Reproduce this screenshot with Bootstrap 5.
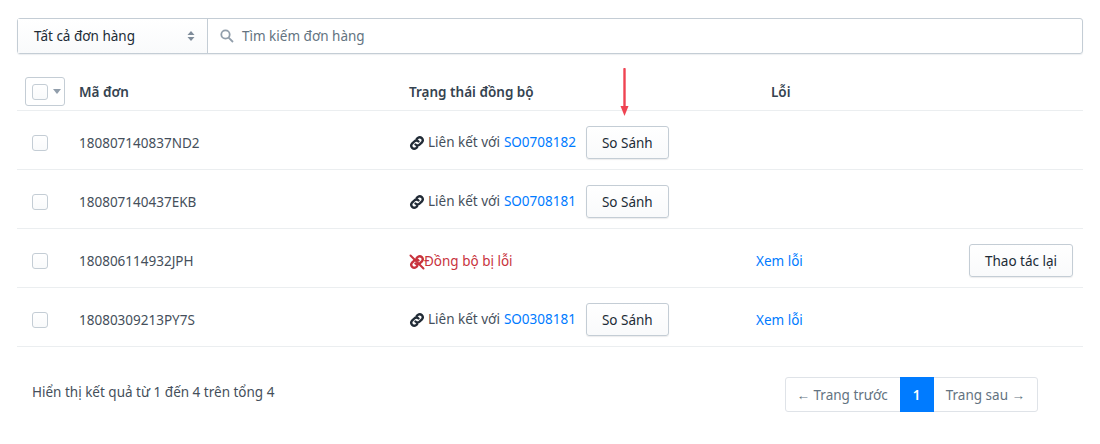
<!DOCTYPE html>
<html lang="vi">
<head>
<meta charset="utf-8">
<title>Đơn hàng</title>
<link href="https://cdn.jsdelivr.net/npm/bootstrap@5.3.0/dist/css/bootstrap.min.css" rel="stylesheet">
<style>
html,body{height:444px;overflow:hidden}
body{font-family:"Noto Sans","Liberation Sans",sans-serif;font-size:13.5px;color:#212b36;background:#fff;padding:18px 17px 0}
.filter-bar{height:36px;border:1px solid #c4cdd5;border-radius:3px;box-shadow:0 1px 1px rgba(99,115,129,.12)}
.filter-select{width:190px;padding:0 12px 0 16px;background:linear-gradient(#fff,#f9fafb);border-right:1px solid #c4cdd5;color:#212b36}
.filter-search{padding:0 0 0 12px;color:#637381;gap:8px}
.updown{margin-bottom:1px}
.orders{margin:14px 0 0;table-layout:fixed;width:1066px;border-collapse:collapse}
.orders th,.orders td{border-bottom:1px solid #ebeef0;padding:0;vertical-align:middle;color:#454f5b;font-weight:400}
.orders th{height:42px;font-weight:600;color:#354350;padding-top:6px}
.orders td{height:59px;padding-top:6px}
.orders td.txt-cell{padding-top:8px}
.col-chk{width:62px}.col-id{width:330px}.col-sync{width:347px}.col-err{width:213px}
.head-chk{width:40px;height:29px;margin-left:8px;border:1px solid #c4cdd5;border-radius:3px;gap:5px;padding-left:6px}
.chk-box{display:block;width:16px;height:16px;border:1px solid #c4cdd5;border-radius:3px;background:linear-gradient(#fff,#f9fafb)}
.row-chk{margin-left:15px}
.caret-d{width:0;height:0;border:4px solid transparent;border-top:5px solid #919eab;border-bottom:0}
.act-btn{height:33px;border:1px solid #c4cdd5;border-radius:3px;background:linear-gradient(#fff,#f9fafb);font-size:13.5px;color:#212b36;padding:3px 15px 0;box-shadow:0 1px 1px rgba(22,29,37,.08);line-height:1;white-space:nowrap}
.row-gap{gap:10px}
.blue-link{color:#007bff;text-decoration:none}
.so-link{margin-left:1px}
.sync-ok{color:#454f5b;gap:3px}
.sync-bad{color:#c8333d;gap:0;padding-top:0}
.lnk-ic{flex:none;margin-top:1px}
.sync-bad .lnk-ic{margin-right:-1px}
.retry{margin-right:10px;margin-top:-1px}
.err-head{padding-left:15px!important}
.foot-text{color:#454f5b;padding-left:15px;padding-bottom:4px}
.pager{height:35px;border:1px solid #dfe3e8;border-radius:3px;color:#637381;margin-right:45px}
.pager span{padding:2px 12px 0}
.pager span:first-child{padding-left:11px}
.pager .pg-on{background:#007bff;color:#fff;font-weight:600;height:35px;margin:-1px 0;width:34px;padding:2px 0 0;display:flex;align-items:center;justify-content:center}
.foot-row{margin-top:30px}
.red-arrow{position:absolute;left:620px;top:68px}
</style>
</head>
<body>
<div class="filter-bar d-flex">
  <div class="filter-select d-flex align-items-center justify-content-between">
    <span>Tất cả đơn hàng</span>
    <svg class="updown" width="8" height="12" viewBox="0 0 8 12"><path d="M4 1 7.5 5h-7zM4 11 .5 7h7z" fill="#7f8c9a"/></svg>
  </div>
  <div class="filter-search d-flex align-items-center flex-grow-1">
    <svg width="14" height="14" viewBox="0 0 14 14" fill="none" stroke="#919eab" stroke-width="1.8"><circle cx="5.5" cy="5.5" r="4.2"/><path d="m8.6 8.6 4.4 4.4"/></svg>
    <span>Tìm kiếm đơn hàng</span>
  </div>
</div>

<svg class="red-arrow" width="9" height="50" viewBox="0 0 9 50"><path d="M4.5 1v40" stroke="#ef4352" stroke-width="2.4" stroke-linecap="round"/><path d="M.5 38h8l-4 10z" fill="#ef4352"/></svg>

<table class="orders">
  <colgroup><col class="col-chk"><col class="col-id"><col class="col-sync"><col class="col-err"><col></colgroup>
  <thead>
    <tr>
      <th><div class="head-chk d-flex align-items-center"><span class="chk-box"></span><span class="caret-d"></span></div></th>
      <th>Mã đơn</th>
      <th>Trạng thái đồng bộ</th>
      <th class="err-head">Lỗi</th>
      <th></th>
    </tr>
  </thead>
  <tbody>
    <tr>
      <td><span class="chk-box row-chk"></span></td>
      <td class="txt-cell">180807140837ND2</td>
      <td><div class="d-flex align-items-center row-gap"><span class="sync-ok d-flex align-items-center"><svg class="lnk-ic" width="16" height="16" viewBox="0 0 16 16" fill="none" stroke="#212b36" stroke-width="2.4" stroke-linecap="round"><path d="M6.5 9.5a3 3 0 0 0 4.2 0l2.4-2.4a3 3 0 0 0-4.2-4.2L7.8 3.9"/><path d="M9.5 6.5a3 3 0 0 0-4.2 0L2.9 8.9a3 3 0 0 0 4.2 4.2l1-1"/></svg>Liên kết với <a class="blue-link so-link" href="#">SO0708182</a></span><button class="act-btn" type="button">So Sánh</button></div></td>
      <td></td><td></td>
    </tr>
    <tr>
      <td><span class="chk-box row-chk"></span></td>
      <td class="txt-cell">180807140437EKB</td>
      <td><div class="d-flex align-items-center row-gap"><span class="sync-ok d-flex align-items-center"><svg class="lnk-ic" width="16" height="16" viewBox="0 0 16 16" fill="none" stroke="#212b36" stroke-width="2.4" stroke-linecap="round"><path d="M6.5 9.5a3 3 0 0 0 4.2 0l2.4-2.4a3 3 0 0 0-4.2-4.2L7.8 3.9"/><path d="M9.5 6.5a3 3 0 0 0-4.2 0L2.9 8.9a3 3 0 0 0 4.2 4.2l1-1"/></svg>Liên kết với <a class="blue-link so-link" href="#">SO0708181</a></span><button class="act-btn" type="button">So Sánh</button></div></td>
      <td></td><td></td>
    </tr>
    <tr>
      <td><span class="chk-box row-chk"></span></td>
      <td class="txt-cell">180806114932JPH</td>
      <td class="txt-cell"><span class="sync-bad d-flex align-items-center"><svg class="lnk-ic" width="16" height="16" viewBox="0 0 16 16" fill="none" stroke="#c8333d" stroke-width="2.4" stroke-linecap="round"><path d="M6.5 9.5a3 3 0 0 0 4.2 0l2.4-2.4a3 3 0 0 0-4.2-4.2L7.8 3.9"/><path d="M9.5 6.5a3 3 0 0 0-4.2 0L2.9 8.9a3 3 0 0 0 4.2 4.2l1-1"/><path d="M1.5 1.5l13 13" stroke-width="2"/></svg>Đồng bộ bị lỗi</span></td>
      <td class="txt-cell"><a class="blue-link" href="#">Xem lỗi</a></td>
      <td class="text-end"><button class="act-btn retry" type="button">Thao tác lại</button></td>
    </tr>
    <tr>
      <td><span class="chk-box row-chk"></span></td>
      <td class="txt-cell">18080309213PY7S</td>
      <td><div class="d-flex align-items-center row-gap"><span class="sync-ok d-flex align-items-center"><svg class="lnk-ic" width="16" height="16" viewBox="0 0 16 16" fill="none" stroke="#212b36" stroke-width="2.4" stroke-linecap="round"><path d="M6.5 9.5a3 3 0 0 0 4.2 0l2.4-2.4a3 3 0 0 0-4.2-4.2L7.8 3.9"/><path d="M9.5 6.5a3 3 0 0 0-4.2 0L2.9 8.9a3 3 0 0 0 4.2 4.2l1-1"/></svg>Liên kết với <a class="blue-link so-link" href="#">SO0308181</a></span><button class="act-btn" type="button">So Sánh</button></div></td>
      <td class="txt-cell"><a class="blue-link" href="#">Xem lỗi</a></td>
      <td></td>
    </tr>
  </tbody>
</table>

<div class="foot-row d-flex align-items-center justify-content-between">
  <div class="foot-text">Hiển thị kết quả từ 1 đến 4 trên tổng 4</div>
  <div class="pager d-flex align-items-center">
    <span>← Trang trước</span><span class="pg-on">1</span><span>Trang sau →</span>
  </div>
</div>
</body>
</html>
